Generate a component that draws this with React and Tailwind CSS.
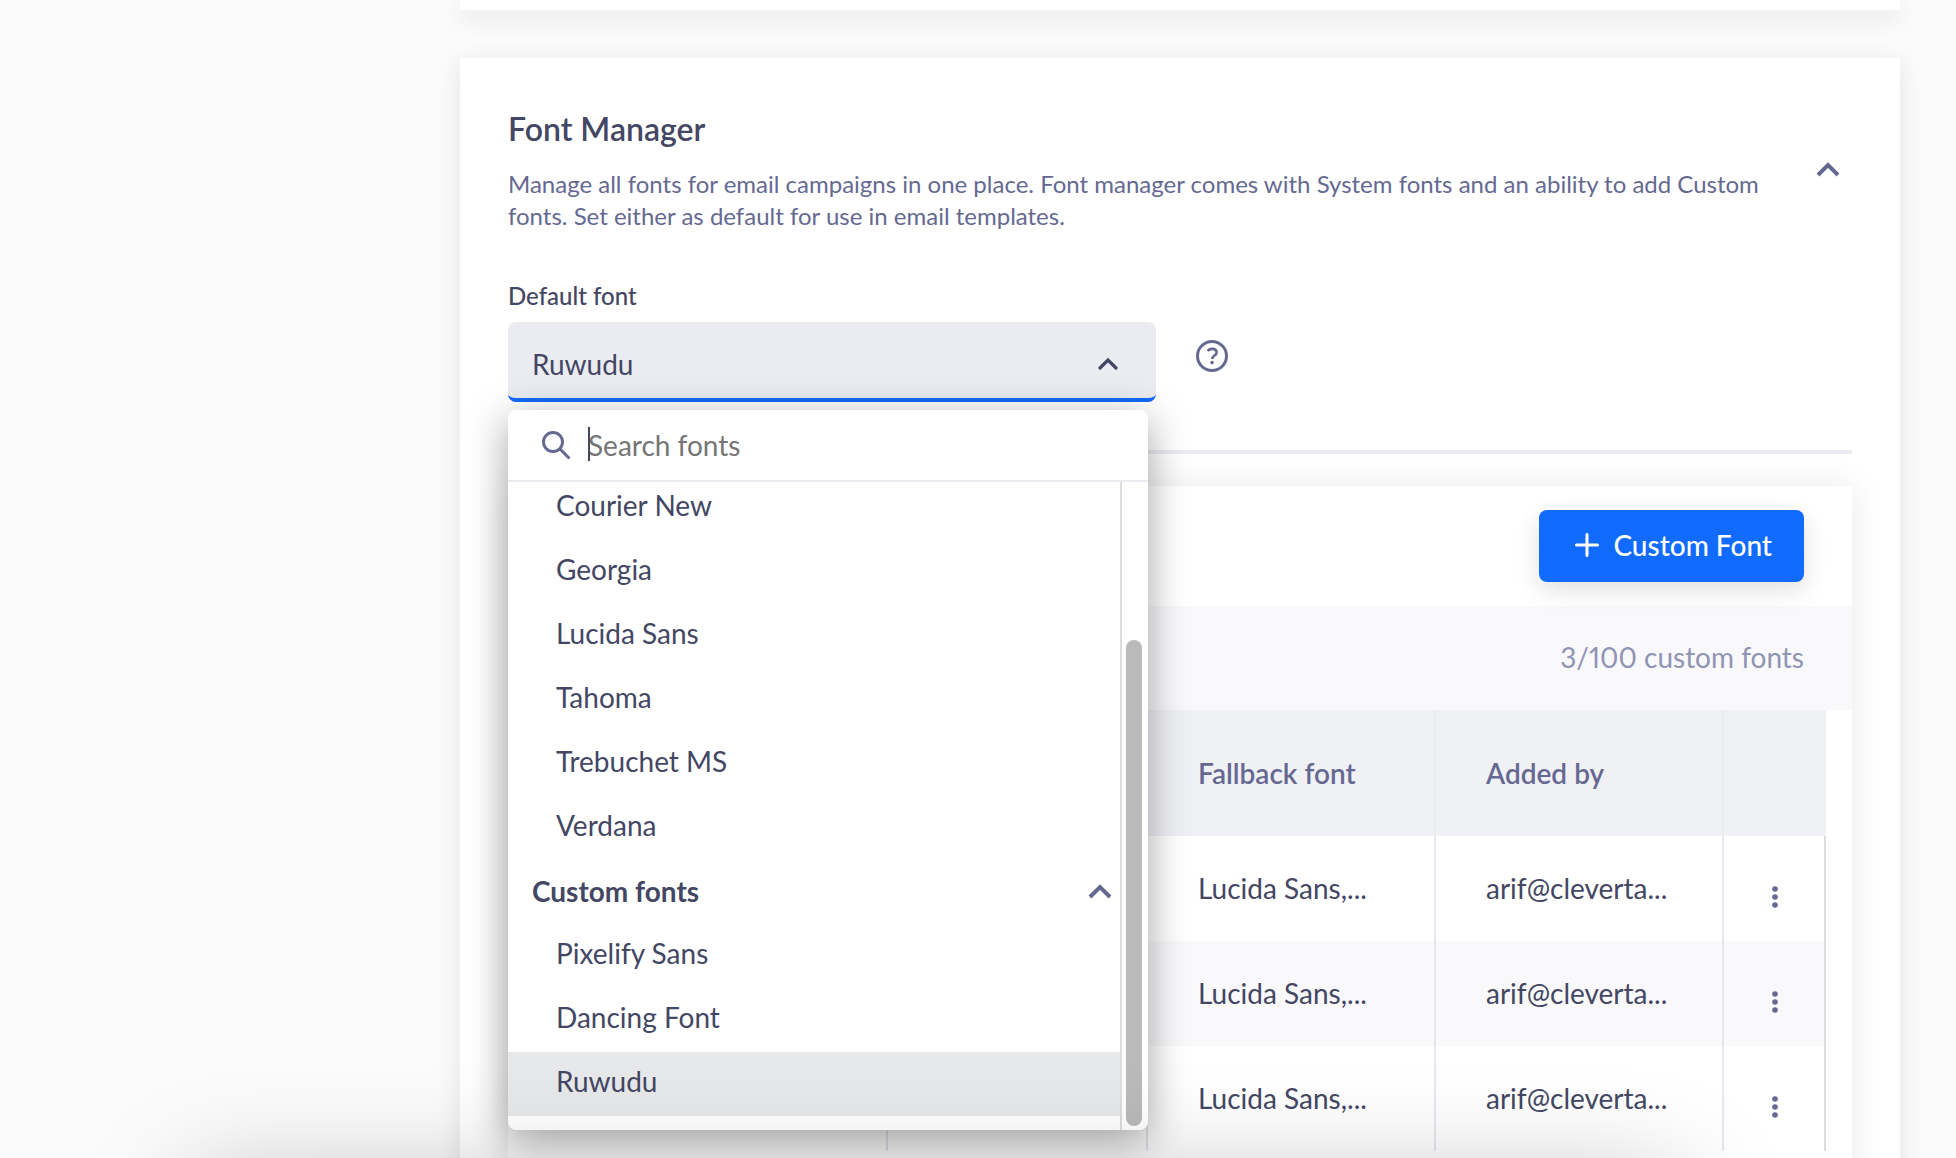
import { useState } from "react";

const SYSTEM_FONTS = ["Courier New", "Georgia", "Lucida Sans", "Tahoma", "Trebuchet MS", "Verdana"];
const CUSTOM_FONTS = ["Pixelify Sans", "Dancing Font", "Ruwudu"];
const ROWS = [1, 2, 3].map((id) => ({ id, fallback: "Lucida Sans,...", addedBy: "arif@cleverta..." }));

function ChevronUp({ className }) {
  return (
    <svg viewBox="0 0 24 16" fill="none" stroke="currentColor" strokeWidth="4" className={className} aria-hidden="true">
      <path d="M2 14 12 4l10 10" />
    </svg>
  );
}

function SmallChevronUp() {
  return (
    <svg viewBox="0 0 20 14" fill="none" stroke="currentColor" strokeWidth="3.2" strokeLinecap="round" className="h-[14px] w-5" aria-hidden="true">
      <path d="m2 11 8-8 8 8" />
    </svg>
  );
}

function SearchIcon() {
  return (
    <svg viewBox="0 0 30 30" fill="none" stroke="currentColor" strokeWidth="3" className="size-[30px] text-[#656992]" aria-hidden="true">
      <circle cx="12" cy="12" r="9.5" />
      <path d="m18.5 18.5 10 10" />
    </svg>
  );
}

function HelpIcon() {
  return (
    <svg viewBox="0 0 32 32" fill="none" stroke="currentColor" className="size-8" aria-hidden="true">
      <circle cx="16" cy="16" r="14.5" strokeWidth="3" />
      <path d="M11.8 11.2c.8-1.6 2.3-2.3 4.3-2.3 2.6 0 4.5 1.3 4.5 3.5 0 3-4.4 3.3-4.4 6.6" strokeWidth="2.6" />
      <circle cx="16.1" cy="22.6" r="1.8" fill="currentColor" stroke="none" />
    </svg>
  );
}

function PlusIcon() {
  return (
    <svg viewBox="0 0 24 24" fill="none" stroke="currentColor" strokeWidth="3" strokeLinecap="round" className="size-6" aria-hidden="true">
      <path d="M12 1.5v21M1.5 12h21" />
    </svg>
  );
}

function DotsIcon() {
  return (
    <svg viewBox="0 0 8 24" fill="currentColor" className="h-6 w-2" aria-hidden="true">
      <circle cx="4" cy="4" r="2.8" />
      <circle cx="4" cy="12" r="2.8" />
      <circle cx="4" cy="20" r="2.8" />
    </svg>
  );
}

function FontList({ label, fonts, value, onSelect, className, optionClassName }) {
  return (
    <ul role="listbox" aria-label={label} className={className}>
      {fonts.map((name) => (
        <li key={name} role="option" aria-selected={name === value}>
          <button
            type="button"
            onClick={() => onSelect(name)}
            className={`flex h-16 w-full items-center pl-12 text-left ${optionClassName} ${name === value ? "bg-[#e7e8ea]" : "bg-white"}`}
          >
            {name}
          </button>
        </li>
      ))}
    </ul>
  );
}

function FontDropdown({ value, onSelect }) {
  return (
    <div className="absolute top-[88px] left-0 z-10 w-[640px] overflow-hidden rounded-lg bg-white shadow-[0_10px_40px_rgba(0,0,0,0.36)]">
      <div className="flex h-[72px] items-center border-b-2 border-[#ebecf2] pl-[33px]">
        <SearchIcon />
        <div className="relative ml-[17px] flex-1">
          <input
            type="text"
            aria-label="Search fonts"
            placeholder="Search fonts"
            className="block h-9 w-full bg-transparent text-[#434763] outline-none placeholder:text-[#757575]"
          />
          <span className="absolute top-0 left-0 h-[34px] w-0.5 bg-[#434763]" />
        </div>
      </div>
      <div className="flex h-[648px]">
        <div className="flex-1 overflow-hidden border-r-2 border-[#dcdcdc]">
          <FontList label="System fonts" fonts={SYSTEM_FONTS} value={value} onSelect={onSelect} className="-mt-2" optionClassName="pb-0.5" />
          <button type="button" className="flex h-[66px] w-full items-center justify-between pr-2 pl-6 font-bold">
            Custom fonts
            <ChevronUp className="h-4 w-6 text-[#656992]" />
          </button>
          <FontList label="Custom fonts" fonts={CUSTOM_FONTS} value={value} onSelect={onSelect} optionClassName="pb-1.5" />
        </div>
        <div className="flex w-[26px] items-end pb-1 pl-1">
          <div className="h-[486px] w-4 rounded-full bg-[#bababa]" />
        </div>
      </div>
    </div>
  );
}

function FontTable() {
  return (
    <section className="mt-8 h-[760px] bg-white shadow-[0_0_32px_rgba(0,0,0,0.09)]">
      <div className="flex h-[120px] items-center justify-end px-12">
        <button
          type="button"
          className="flex h-[72px] items-center gap-3.5 rounded-lg bg-[#126bff] pr-8 pb-0.5 pl-9 font-medium text-white shadow-[0_8px_24px_rgba(0,0,0,0.12)]"
        >
          <PlusIcon />
          Custom Font
        </button>
      </div>
      <div className="flex h-[104px] items-center justify-end bg-[#f9f9fb] px-12 pb-0.5 text-[#9094b5] proportional-nums">3/100 custom fonts</div>
      <div className="pr-[26px]">
        <table className="w-full table-fixed border-separate border-spacing-0 text-left">
          <colgroup>
            <col />
            <col className="w-[260px]" />
            <col className="w-72" />
            <col className="w-72" />
            <col className="w-[102px]" />
          </colgroup>
          <thead>
            <tr className="h-[126px] bg-[#f0f1f5] text-[#656992]">
              <td className="border-r-2 border-[#ebecf1]" />
              <td className="border-r-2 border-[#ebecf1]" />
              <th scope="col" className="border-r-2 border-[#ebecf1] pl-[50px] font-semibold">Fallback font</th>
              <th scope="col" className="border-r-2 border-[#ebecf1] pl-[50px] font-semibold">Added by</th>
              <td />
            </tr>
          </thead>
          <tbody>
            {ROWS.map((row) => (
              <tr key={row.id} className="h-[105px] bg-white even:bg-[#f9f9fb]">
                <td className="border-r-2 border-[#e6e7ee]" />
                <td className="border-r-2 border-[#e6e7ee]" />
                <td className="border-r-2 border-[#e6e7ee] pb-0.5 pl-[50px]">{row.fallback}</td>
                <td className="border-r-2 border-[#e6e7ee] pb-0.5 pl-[50px]">{row.addedBy}</td>
                <td className="border-r-2 border-[#dcdcdc] pl-0.5">
                  <button type="button" aria-label="Row actions" className="mx-auto mt-4 block text-[#656992]">
                    <DotsIcon />
                  </button>
                </td>
              </tr>
            ))}
          </tbody>
        </table>
      </div>
    </section>
  );
}

export default function App() {
  const [font, setFont] = useState("Ruwudu");

  return (
    <div className="relative h-screen overflow-hidden bg-[#fbfbfb] pr-14 pl-[460px] font-['Lato',sans-serif] text-[28px] text-[#434763]">
      <div className="h-[10px] bg-white shadow-[0_6px_24px_rgba(0,0,0,0.13)]" />

      <main className="mt-12 bg-white p-12 shadow-[0_6px_24px_rgba(0,0,0,0.1)]">
        <header className="flex items-center justify-between">
          <div className="flex-1">
            <h1 className="text-[32px] leading-[46px] font-semibold">Font Manager</h1>
            <p className="mt-4 text-2xl leading-8 text-[#656992]">
              Manage all fonts for email campaigns in one place. Font manager comes with System fonts and an ability to add Custom
              fonts. Set either as default for use in email templates.
            </p>
          </div>
          <button type="button" aria-label="Collapse" className="flex size-12 items-center justify-center text-[#656992]">
            <ChevronUp className="h-4 w-6" />
          </button>
        </header>

        <p id="default-font-label" className="mt-12 text-2xl leading-8 font-medium">Default font</p>
        <div className="relative mt-2.5 flex gap-10">
          <button
            type="button"
            aria-haspopup="listbox"
            aria-expanded="true"
            aria-labelledby="default-font-label"
            className="flex h-20 w-[648px] items-center justify-between rounded-lg border-b-4 border-[#126bff] bg-[#ebecf2] pt-2 pr-[38px] pl-6"
          >
            {font}
            <SmallChevronUp />
          </button>
          <button type="button" aria-label="Help" className="mt-[18px] size-8 text-[#656992]">
            <HelpIcon />
          </button>
          <FontDropdown value={font} onSelect={setFont} />
        </div>

        <hr className="mt-12 border-t-4 border-[#ebecf2]" />
        <FontTable />
      </main>

      <div className="pointer-events-none absolute top-full right-[276px] left-[190px] z-20 mt-6 h-40 shadow-[0_0_110px_rgba(0,0,0,0.26)]" />
    </div>
  );
}
